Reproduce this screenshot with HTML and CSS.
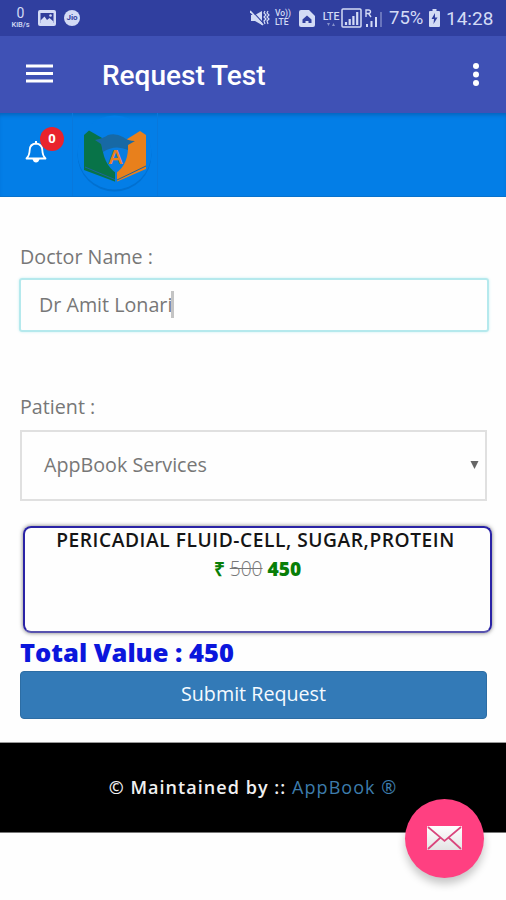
FILE: index.html
```html
<!DOCTYPE html>
<html lang="en">
<head>
<meta charset="utf-8">
<title>Request Test</title>
<link rel="stylesheet" href="styles.css">
</head>
<body>
<div class="status">
  <div class="speed"><span class="speed-num">0</span><span class="speed-unit">KiB/s</span></div>
  <svg class="ic-photo" width="18" height="16" viewBox="0 0 18 16"><rect width="18" height="16" rx="2" fill="#d3dbf5"/><rect x="2.5" y="3" width="13" height="10" fill="#2f3d9b"/><path d="M2.5 13V10.500L6.500 6.500L9 10L11.500 8L15.500 11.500V13Z" fill="#d3dbf5"/><circle cx="12.500" cy="5.500" r="1.300" fill="#d3dbf5"/></svg>
  <div class="jio">Jio</div>
  <div class="grow"></div>
  <svg class="ic-mute" width="20" height="16" viewBox="0 0 20 16" fill="none" stroke="#d3dbf5"><path d="M1 5H5L12 1V15L5 11H1Z" fill="#d3dbf5" stroke="none"/><path d="M1 0L14 14" stroke="#303f9f" stroke-width="1.200"/><path d="M0 1L13 15" stroke-width="1.800"/><path d="M15 1L14 3L16 5L14 7L16 9L14 11L15 14M18 1L17 3L19 5L17 7L19 9L17 11L18 14" stroke-width="1.200"/></svg>
  <div class="volte"><span>Vo))</span><span>LTE</span></div>
  <svg class="ic-sim" width="16" height="17" viewBox="0 0 16 17"><path d="M2 0H10L16 6V15Q16 17 14 17H2Q0 17 0 15V2Q0 0 2 0Z" fill="#d3dbf5"/><path d="M3.500 9.500L8 5.500L12.500 9.500V13H3.500Z" fill="#303f9f"/><path d="M6.500 13V11H9.500V13Z" fill="#d3dbf5"/></svg>
  <div class="lte"><span>LTE</span><svg width="10" height="4" viewBox="0 0 10 4" fill="#8591cb"><path d="M1 0H4L2.500 3ZM6 3H9L7.500 0Z"/></svg></div>
  <svg class="ic-signal" width="21" height="20" viewBox="0 0 21 20" fill="none" stroke="#d3dbf5"><rect x="1" y="1" width="19" height="18" rx="1" stroke-width="1.500"/><path d="M5 17V14M8.700 17V11M12.400 17V8M16.200 17V4" stroke-width="2.200"/></svg>
  <svg class="ic-roam" width="18" height="19" viewBox="0 0 18 19" fill="none" stroke="#d3dbf5"><path d="M1 8V1H3.500Q5.500 1 5.500 2.800Q5.500 4.500 3.500 4.500H1M3.500 4.500L6 8" stroke-width="1.400"/><path d="M2 18V15M6.500 18V12M11 18V8" stroke-width="2"/><path d="M16 18V3" stroke-width="2" opacity=".35"/></svg>
  <span class="pct">75%</span>
  <svg class="ic-batt" width="11" height="18" viewBox="0 0 11 18"><path d="M3.500 0H7.500V2H10Q11 2 11 3V17Q11 18 10 18H1Q0 18 0 17V3Q0 2 1 2H3.500Z" fill="#d3dbf5"/><path d="M6 4L2.500 10H5L4.500 15L8.500 8.500H6Z" fill="#303f9f"/></svg>
  <span class="clock">14:28</span>
</div>
<header class="toolbar">
  <svg width="27" height="21" viewBox="0 0 27 21"><path d="M0 2H27M0 9.500H27M0 17H27" stroke="#fff" stroke-width="3"/></svg>
  <h1>Request Test</h1>
  <svg class="more" width="8" height="24" viewBox="0 0 8 24" fill="#fff"><circle cx="4" cy="3" r="3"/><circle cx="4" cy="11.500" r="3"/><circle cx="4" cy="20" r="3"/></svg>
</header>
<nav class="brandbar">
  <div class="bell">
    <svg width="22" height="23" viewBox="0 0 22 23" fill="none" stroke="#fff"><path d="M1.500 18.500Q4.500 15.500 4.700 10Q4.900 4 11 3.500Q17.100 4 17.300 10Q17.500 15.500 20.500 18.500Z" stroke-width="1.800" stroke-linejoin="round"/><path d="M11 1V4" stroke-width="2"/><path d="M7.500 19H14.500Q13.500 22.500 11 22.500Q8.500 22.500 7.500 19Z" fill="#fff" stroke="none"/></svg>
    <span class="badge">0</span>
  </div>
  <div class="logo">
    <svg width="84" height="82" viewBox="74 115 84 82">
      <circle cx="115.500" cy="155.500" r="37" fill="#0065bd" opacity=".55"/><circle cx="115.500" cy="153.500" r="37" fill="#037ee7"/>
      <path d="M85 136L90 131.500L117 147V183L85 171Z" fill="#087348"/>
      <path d="M147 136L141 132L117 147V183L147 170Z" fill="#e8801c"/>
      <path d="M86 168L117 181M118 181L147 167" stroke="#1b649c" stroke-width="1" fill="none"/>
      <path d="M103 145H129Q130 165 117 174Q104 165 103 145Z" fill="#087de0"/>
      <path d="M96 141Q105 139 109 136Q117 134 124 138Q129 142 136 142L129 146V151Q116 145 104 153L102 145Z" fill="#1769a5"/>
      <path d="M117 170V183" stroke="#087de0" stroke-width="2"/>
      <text x="116.500" y="165" text-anchor="middle" class="logo-letter">A</text>
    </svg>
  </div>
</nav>
<main>
  <label class="lab doctor">Doctor Name :</label>
  <div class="field"><span class="val">Dr Amit Lonari</span><i class="caret"></i></div>
  <label class="lab patient">Patient :</label>
  <div class="select"><span class="selval">AppBook Services</span><svg width="9" height="8" viewBox="0 0 9 8"><path d="M0.500 0H8.500L4.500 8Z" fill="#666"/></svg></div>
  <section class="card">
    <div class="test">PERICADIAL FLUID-CELL, SUGAR,PROTEIN</div>
    <div class="price"><span class="rupee">₹</span> <s>500</s> <b>450</b></div>
  </section>
  <div class="total"><span>Total Value : 450</span></div>
  <button class="submit">Submit Request</button>
</main>
<footer><span class="maint">© Maintained by ::</span> <a>AppBook ®</a></footer>
<div class="fab"><svg width="35" height="25" viewBox="0 0 35 25"><defs><linearGradient id="paper" x2="0" y2="1"><stop stop-color="#fff"/><stop offset="1" stop-color="#e4e4e4"/></linearGradient></defs><rect width="35" height="24" rx="1" fill="url(#paper)"/><path d="M1 1L17.500 15L34 1M1 23L13 12M34 23L22 12" fill="none" stroke="#d9467c" stroke-width="1.700"/></svg></div>
</body>
</html>
```
FILE: styles.css
```css
* { box-sizing: border-box; }
body { margin: 0; width: 506px; height: 900px; overflow: hidden; position: relative; background: #fefefe; font-family: "Open Sans", sans-serif; color: #777; }
svg { display: block; flex: none; }
.status { height: 36px; background: #303f9f; color: #d3dbf5; display: flex; align-items: center; font-family: Roboto, sans-serif; }
.speed { margin-left: 10px; width: 21px; display: flex; flex-direction: column; align-items: center; }
.speed-num { font-size: 14px; line-height: 13px; }
.speed-unit { font-size: 7.500px; line-height: 9px; font-weight: 500; }
.ic-photo { margin-left: 7px; }
.jio { margin-left: 8px; width: 16px; height: 16px; border-radius: 50%; background: #d3dbf5; color: #303f9f; font-size: 8px; line-height: 16px; font-weight: 700; text-align: center; }
.grow { flex: 1; }
.volte { margin-left: 5px; width: 18px; display: flex; flex-direction: column; font-size: 8.500px; line-height: 9px; font-weight: 500; white-space: nowrap; }
.ic-sim { margin-left: 6px; }
.lte { margin-left: 6px; width: 20px; display: flex; flex-direction: column; align-items: center; font-size: 10.500px; line-height: 13px; font-weight: 500; }
.ic-roam { margin-left: 3px; }
.pct { margin-left: 6px; width: 34px; font-size: 18.500px; white-space: nowrap; }
.ic-batt { margin-left: 6px; }
.clock { margin-left: 6px; width: 60px; font-size: 19px; white-space: nowrap; }
.toolbar { height: 77px; background: #3f51b5; display: flex; align-items: center; padding: 0 26px; color: #fff; }
.toolbar h1 { margin: 2px 0 0 49px; font: 500 28px/36px Roboto, sans-serif; flex: 1; white-space: nowrap; }
.brandbar { height: 84px; background: #037ee7; border-bottom: 1px solid #0872cc; display: flex; box-shadow: inset 0 4px 4px -2px #0563bb; }
.bell { position: relative; margin: 27px 0 0 25px; width: 47px; }
.badge { position: absolute; left: 15px; top: -13px; width: 24px; height: 24px; border-radius: 50%; background: #e9232d; color: #fff; font-weight: 700; font-size: 13px; line-height: 23px; text-align: center; }
.logo { border-left: 1px solid #0878dc; border-right: 1px solid #0878dc; padding-top: 1px; height: 83px; overflow: hidden; }
.logo-letter { font: 700 21px "Liberation Sans", sans-serif; fill: #e9801e; }
main { padding: 0 19px 0 20px; height: 545px; }
.lab { display: block; font-size: 19.700px; line-height: 28px; white-space: nowrap; }
.doctor { padding-top: 46px; height: 81px; }
.field { margin-left: -1px; margin-right: -2px; height: 54px; border: 2px solid #b5e9ed; border-radius: 3px; box-shadow: 0 0 3px #c9f0f2; display: flex; align-items: center; padding: 0 0 2px 18px; font-size: 19.700px; }
.caret { width: 3px; height: 27px; margin-left: -1px; background: #c4c4c4; }
.patient { padding-top: 61px; height: 98px; }
.select { height: 71px; border: 2px solid #e0e0e0; display: flex; align-items: center; justify-content: space-between; padding: 0 6px 2px 22px; font-size: 19.700px; }
.card { margin: 25px -5px 0 3px; height: 107px; border: 2px solid #2a23a5; border-bottom-color: #5853ae; border-radius: 8px; box-shadow: 0 0 4px #777; text-align: center; }
.test { margin: -2px 4px 0 0; font-size: 19.200px; line-height: 28px; font-weight: 600; letter-spacing: .55px; color: #151515; white-space: nowrap; }
.price { font-size: 19.200px; line-height: 30px; }
.rupee, .price b { color: #087e08; font-weight: 800; }
.price s { font-weight: 300; }
.total { height: 38px; font-size: 25.500px; line-height: 38px; font-weight: 800; color: #0b16dc; white-space: nowrap; }
.submit { display: block; width: 467px; height: 48px; padding: 0 0 4px; border: 1px solid #2d6da4; border-radius: 4px; background: #337ab7; color: #f5faff; font: 400 19.700px "Open Sans", sans-serif; }
footer { height: 91px; background: #000; border-top: 1px solid #999; border-bottom: 1px solid #777; color: #f0f0f0; text-align: center; font-size: 18px; line-height: 88px; font-weight: 600; letter-spacing: 1.050px; white-space: nowrap; }
footer a { color: #3d7cac; font-weight: 400; }
.fab { position: absolute; left: 405px; top: 799px; width: 79px; height: 79px; border-radius: 50%; background: #ff4081; box-shadow: 0 6px 9px rgba(0,0,0,.22); display: flex; align-items: center; justify-content: center; }
```
